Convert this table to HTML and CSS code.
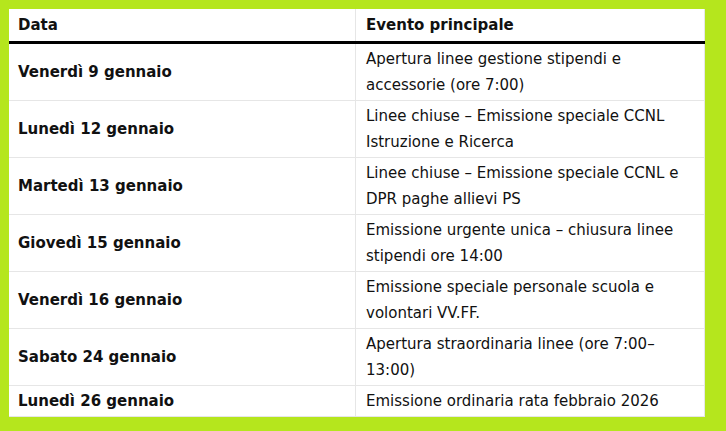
FILE: index.html
```html
<!DOCTYPE html>
<html lang="it">
<head>
<meta charset="utf-8">
<link rel="stylesheet" href="styles.css">
</head>
<body>
<div class="frame">
<table class="events">
<thead>
<tr><th>Data</th><th>Evento principale</th></tr>
</thead>
<tbody>
<tr><td class="date">Venerdì 9 gennaio</td><td>Apertura linee gestione stipendi e accessorie (ore 7:00)</td></tr>
<tr><td class="date">Lunedì 12 gennaio</td><td>Linee chiuse – Emissione speciale CCNL Istruzione e Ricerca</td></tr>
<tr><td class="date">Martedì 13 gennaio</td><td>Linee chiuse – Emissione speciale CCNL e DPR paghe allievi PS</td></tr>
<tr><td class="date">Giovedì 15 gennaio</td><td>Emissione urgente unica – chiusura linee stipendi ore 14:00</td></tr>
<tr><td class="date">Venerdì 16 gennaio</td><td>Emissione speciale personale scuola e volontari VV.FF.</td></tr>
<tr><td class="date">Sabato 24 gennaio</td><td>Apertura straordinaria linee (ore 7:00–13:00)</td></tr>
<tr><td class="date">Lunedì 26 gennaio</td><td>Emissione ordinaria rata febbraio 2026</td></tr>
</tbody>
</table>
</div>
</body>
</html>
```
FILE: styles.css
```css
html, body {
  margin: 0;
  padding: 0;
  background: #b5e61d;
}
body {
  width: 726px;
  height: 431px;
  overflow: hidden;
}
.frame {
  padding: 9px 21px 0 9px;
}
.events {
  width: 696px;
  border-collapse: collapse;
  background: #fff;
  font-family: "DejaVu Sans", Verdana, sans-serif;
  font-size: 15px;
  line-height: 26px;
  color: #111;
  table-layout: fixed;
}
.events th,
.events td {
  text-align: left;
  vertical-align: middle;
  padding: 2px 9px 2px 9px;
  border: 1px solid #e6e6e6;
}
.events th:first-child,
.events td:first-child {
  width: 328px;
  border-left: none;
}
.events th:last-child,
.events td:last-child {
  padding-left: 10px;
}
.events thead th {
  font-weight: bold;
  border-top: none;
  border-bottom: 3px solid #000;
  padding-top: 3px;
  padding-bottom: 3px;
}
.events td.date {
  font-weight: bold;
}
```
